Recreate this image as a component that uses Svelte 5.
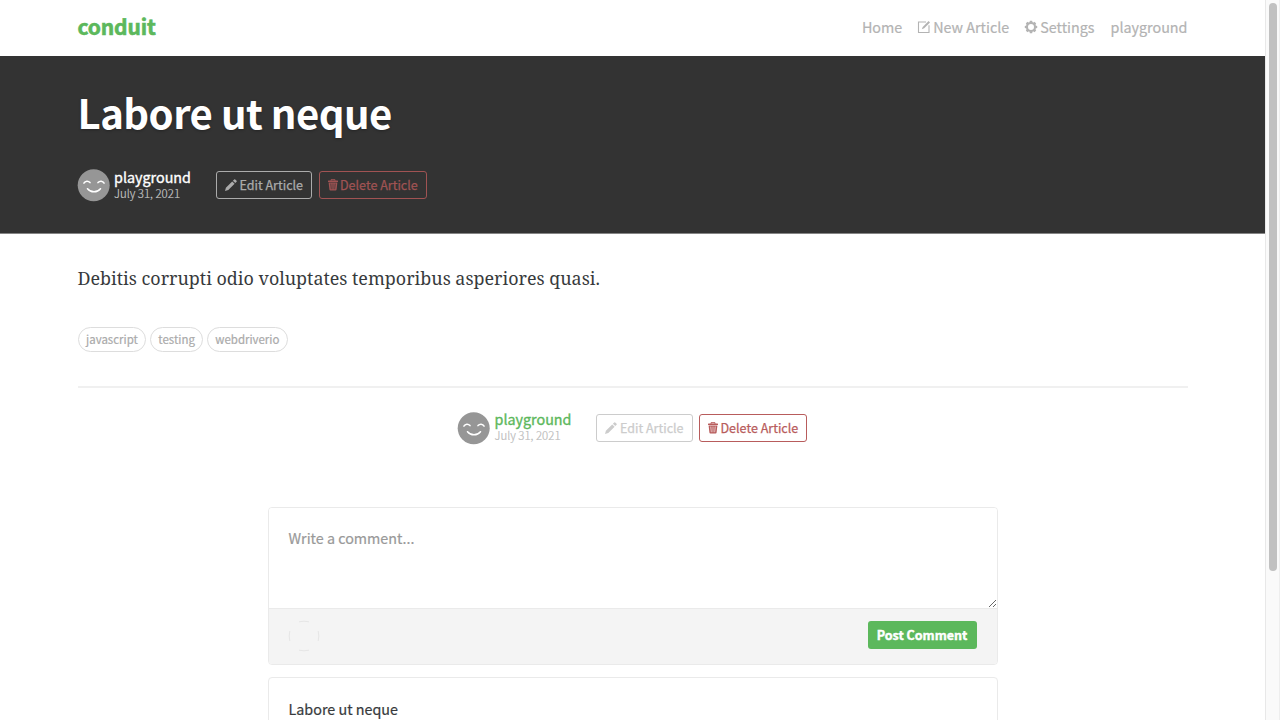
<script>
  const tags = ['javascript', 'testing', 'webdriverio'];
</script>

{#snippet avatar()}
  <svg class="avatar" viewBox="0 0 32 32">
    <circle cx="15.700" cy="16.300" r="16" fill="#969696" />
    <g fill="none" stroke="#fff" stroke-width="1.5" stroke-linecap="round">
      <path d="M5.9 14.2C7.3 11.6 10.3 11.6 12 13.6" />
      <path d="M20 13.6C21.7 11.6 24.7 11.6 26.1 14.2" />
      <path d="M9.5 19.7C12.9 23.8 19.1 23.8 22.5 19.7" />
    </g>
  </svg>
{/snippet}

{#snippet actions()}
  <button class="btn edit">
    <svg class="pencil" viewBox="0 0 12 12" fill="currentColor">
      <path d="M0 12 .9 8.7 7.2 2.4 9.6 4.8 3.3 11.1ZM7.9 1.7 9.2.4Q9.7-.1 10.2.4L11.6 1.8Q12.1 2.3 11.6 2.8L10.3 4.1Z" />
    </svg>
    <span>Edit Article</span>
  </button>
  <button class="btn delete">
    <svg class="trash" viewBox="0 0 10 12">
      <path d="M3 1.8V.7H7V1.8" fill="none" stroke="currentColor" stroke-width="1" />
      <path fill="currentColor" fill-rule="evenodd" d="M.5 1.5H9.5Q10 1.5 10 2V3H0V2Q0 1.5.5 1.5ZM.6 3.4H9.4L8.6 10.5Q8.5 11.4 7.6 11.4H2.4Q1.5 11.4 1.4 10.5ZM2.5 4.6 2.9 10.2H3.5L3.2 4.6ZM4.7 4.6V10.2H5.3V4.6ZM6.8 4.6 6.5 10.2H7.1L7.5 4.6Z" />
    </svg>
    <span>Delete Article</span>
  </button>
{/snippet}

{#snippet meta()}
  {@render avatar()}
  <div class="info">
    <a class="author" href="#profile">playground</a>
    <span class="date">July 31, 2021</span>
  </div>
  {@render actions()}
{/snippet}

<div class="window">
  <div class="page">
    <nav class="container navbar">
      <a class="brand" href="#home">conduit</a>
      <div class="links">
        <a href="#home">Home</a>
        <a href="#editor">
          <svg class="compose" viewBox="0 0 12 12">
            <path d="M8 1H.5V11.5H11V4.2" fill="none" stroke="currentColor" stroke-width="1.1" />
            <path d="M3.8 8.3 4.7 5.9 10.6 0 12 1.4 6.2 7.3Z" fill="currentColor" />
          </svg>
          <span>New Article</span>
        </a>
        <a href="#settings">
          <svg class="gear" viewBox="-6 -6 12 12">
            <circle r="4" fill="none" stroke="currentColor" stroke-width="2" />
            <g fill="currentColor">
              {#each [0, 45, 90, 135, 180, 225, 270, 315] as angle}
                <path d="M-1.6-4.2-1.1-6.2H1.1L1.6-4.2Z" transform="rotate({angle})" />
              {/each}
            </g>
          </svg>
          <span>Settings</span>
        </a>
        <a href="#profile">playground</a>
      </div>
    </nav>

    <header class="banner">
      <div class="container">
        <h1>Labore ut neque</h1>
        <div class="meta">{@render meta()}</div>
      </div>
    </header>

    <main class="container">
      <p class="body">Debitis corrupti odio voluptates temporibus asperiores quasi.</p>
      <ul class="tags">
        {#each tags as tag}<li>{tag}</li>{/each}
      </ul>
      <hr />
      <div class="meta centered">{@render meta()}</div>

      <section class="comments">
        <form class="card">
          <textarea placeholder="Write a comment..."></textarea>
          <div class="footer">
            <svg class="placeholder" viewBox="0 0 30 30" fill="none" stroke="#e6e6e6">
              <path d="M10 .8Q15-.4 20 .8M10 29.2Q15 30.4 20 29.2M.8 10Q-.4 15 .8 20M29.2 10Q30.4 15 29.2 20" />
            </svg>
            <button class="post" type="button">Post Comment</button>
          </div>
        </form>
        <article class="card comment">Labore ut neque</article>
      </section>
    </main>
  </div>
  <div class="scrollbar"><div class="thumb"></div></div>
</div>

<style>
  :global(body) { overflow: hidden; background: #fff; }
  * { box-sizing: border-box; }
  .window { display: flex; width: 1280px; height: 720px; overflow: hidden; font-family: "Noto Sans CJK SC", sans-serif; font-size: 14.33px; line-height: 24px; color: #373a3c; -webkit-text-stroke: 0.2px currentColor; }
  .page { width: 1265px; height: 720px; overflow: hidden; }
  .container { width: 1140px; margin: 0 auto; padding: 0 15px; }
  a { text-decoration: none; color: inherit; }
  svg { display: block; flex: none; overflow: visible; }

  .navbar { display: flex; justify-content: space-between; height: 56px; }
  .brand { padding-top: 10px; font-size: 21px; line-height: 32px; font-weight: 700; letter-spacing: -0.15px; color: #5cb85c; -webkit-text-stroke: 0.6px currentColor; }
  .links { display: flex; gap: 16px; padding-top: 15px; color: #b3b3b3; }
  .links a { display: flex; }
  .compose { width: 12px; height: 12px; margin: 6px 3px 0 0; }
  .gear { width: 12px; height: 12px; margin: 6px 3px 0 0; }

  .banner { height: 178px; padding-top: 31px; background: #333; border-bottom: 1px solid #858585; color: #fff; }
  h1 { margin: 0; height: 82px; font-size: 40.1px; line-height: 49px; font-weight: 700; letter-spacing: -0.53px; white-space: nowrap; text-shadow: 0 1px 3px rgba(0, 0, 0, 0.3); -webkit-text-stroke: 0; }

  .meta { display: flex; height: 32px; }
  .avatar { width: 32px; height: 32px; }
  .info { display: flex; flex-direction: column; width: 77px; margin: 0 24.5px 0 4.5px; white-space: nowrap; }
  .author { height: 16px; line-height: 16px; -webkit-text-stroke: 0.35px currentColor; }
  .date { height: 16px; font-size: 11.46px; line-height: 17px; color: #c4c4c4; font-weight: 300; }
  .btn { display: flex; height: 28px; margin-top: 2px; padding: 0 8px; border: 1px solid; border-radius: 3px; background: transparent; font: 400 12.54px/26px "Noto Sans CJK SC", sans-serif; white-space: nowrap; -webkit-text-stroke: 0.25px currentColor; }
  .edit { width: 96.5px; margin-right: 6.5px; color: #ababab; }
  .delete { width: 108px; color: #a05353; }
  .pencil { width: 12px; height: 12px; margin: 7px 3px 0 0; }
  .trash { width: 10px; height: 12px; margin: 7px 2.5px 0 0; }

  .body { margin: 0; padding-top: 28px; height: 93px; font-family: "Noto Serif", serif; font-size: 17.9px; line-height: 32px; white-space: nowrap; -webkit-text-stroke: 0; }
  .tags { display: flex; gap: 3.3px; height: 60px; margin: 0; padding: 0; list-style: none; }
  .tags li { height: 25px; padding: 0 7.6px; border: 1px solid #ddd; border-radius: 13px; font-size: 11.46px; line-height: 23px; color: #aaa; }
  hr { height: 2px; margin: -1px 0 24px; border: 0; background: #f0f0f0; }
  .centered { justify-content: center; }
  .centered .avatar { margin-top: -0.5px; }
  .centered .author { height: 15px; line-height: 14px; color: #5cb85c; }
  .centered .date { color: #bbb; }
  .centered .edit { color: #ccc; }
  .centered .delete { color: #b85c5c; }

  .comments { width: 730px; margin: 63px auto 0; }
  .card { margin: 0 0 12px; border: 1px solid #eaeaea; border-radius: 4px; background: #fff; overflow: hidden; }
  textarea { display: block; width: 100%; height: 100px; padding: 18px 20px; border: 0; outline: 0; resize: vertical; background: #fff; font: 14.33px/24px "Noto Sans CJK SC", sans-serif; -webkit-text-stroke: 0.2px currentColor; }
  textarea::placeholder { color: #999; opacity: 1; }
  .footer { display: flex; justify-content: space-between; height: 56px; padding: 12px 20px; border-top: 1px solid #eaeaea; background: #f4f4f4; }
  .placeholder { width: 30px; height: 30px; }
  .post { width: 109px; height: 28px; padding: 0; border: 0; border-radius: 3px; background: #5cb85c; color: #fff; font: 700 12.54px/28px "Noto Sans CJK SC", sans-serif; -webkit-text-stroke: 0.4px currentColor; }
  .comment { height: 90px; padding: 19px 20px; }

  .scrollbar { width: 15px; height: 720px; padding: 3px 2px 0 3px; border-left: 1px solid #e8e8e8; border-right: 1px solid #eee; background: #fafafa; }
  .thumb { width: 8px; height: 568px; border-radius: 4px; background: #c1c1c1; }
</style>
